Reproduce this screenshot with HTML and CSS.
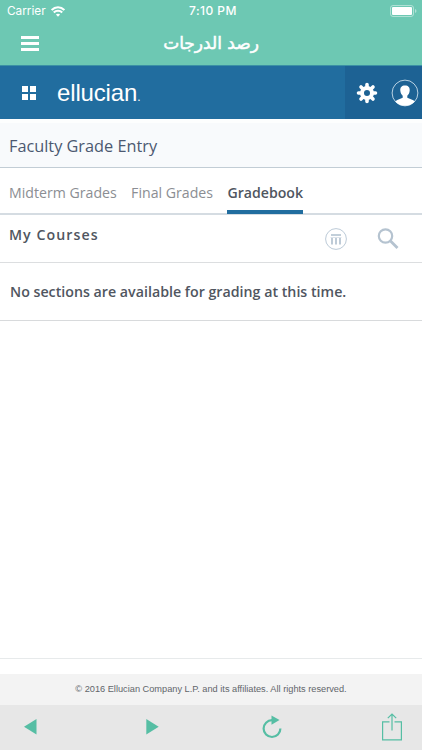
FILE: index.html
```
<!DOCTYPE html>
<html lang="en">
<head>
    <meta charset="UTF-8">
    <meta name="viewport" content="width=device-width, initial-scale=1.0">
    <title>Faculty Grade Entry</title>
    <link rel="stylesheet" href="styles.css">
</head>
<body>
    <div class="status-bar">
        <div class="carrier">
            <span>Carrier</span>
            <svg width="14" height="11" viewBox="0 0 14 11" fill="none" stroke="#fff" stroke-width="2.1">
                <path d="M.6 4.100C4.100.3 9.900.3 13.400 4.100"/>
                <path d="M2.800 6.600c2.300-2.400 6.100-2.400 8.400 0"/>
                <path d="M4.900 8.500L7 10.700l2.100-2.200c-1.200-1.100-3-1.100-4.200 0z" fill="#fff" stroke="none"/>
            </svg>
        </div>
        <div class="time">7:10 PM</div>
        <div class="battery">
            <svg width="27" height="12" viewBox="0 0 27 12">
                <rect x=".5" y=".5" width="23" height="11" rx="2.500" fill="none" stroke="#fff" stroke-opacity=".45"/>
                <rect x="2" y="2" width="20" height="8" rx="1" fill="#fff"/>
                <path d="M25 4v4q1.500-.5 1.500-2T25 4z" fill="#fff" fill-opacity=".45"/>
            </svg>
        </div>
    </div>
    <div class="nav-bar">
        <div class="menu"><i></i><i></i><i></i></div>
        <h1 lang="ar" dir="rtl">رصد الدرجات</h1>
    </div>

    <div class="header">
        <div class="apps"><i></i><i></i><i></i><i></i></div>
        <div class="logo">ellucian<small>.</small></div>
        <div class="user-tools">
            <svg class="gear" width="22" height="22" viewBox="-11 -11 22 22">
                <g stroke="#fff" stroke-width="3.600" stroke-linecap="round">
                    <path d="M0-8.500V-6M0 6v2.500M-8.500 0H-6M6 0h2.500"/>
                    <path d="M-6-6l1.800 1.800M4.200 4.200L6 6M-6 6l1.800-1.800M4.200-4.200L6-6"/>
                </g>
                <circle r="5" fill="none" stroke="#fff" stroke-width="4"/>
            </svg>
            <svg class="avatar" width="28" height="28" viewBox="0 0 28 28">
                <circle cx="14" cy="14" r="12.900" fill="none" stroke="#b9d2e3"/>
                <path d="M14 6.500c-3.300 0-5 2-4.700 5 .2 2.500 1.200 4.200 2.400 5.200v2.100l-5.400 2.300c-1 .4-1.500.9-1.800 1.600A12.700 12.700 0 0 0 14 26.800a12.700 12.700 0 0 0 9.500-4.100c-.3-.7-.8-1.200-1.800-1.600l-5.400-2.300v-2.100c1.200-1 2.200-2.700 2.400-5.200.3-3-1.400-5-4.700-5z" fill="#fff"/>
            </svg>
        </div>
    </div>

    <div class="page-title"><h2>Faculty Grade Entry</h2></div>

    <div class="tabs">
        <div class="tab">Midterm Grades</div>
        <div class="tab">Final Grades</div>
        <div class="tab active">Gradebook</div>
    </div>

    <div class="courses">
        <h3>My Courses</h3>
        <svg class="columns" width="24" height="24" viewBox="0 0 24 24">
            <circle cx="12" cy="12" r="10.400" fill="none" stroke="#bdcbd8"/>
            <path d="M7 8h10" stroke="#aebfce" stroke-width="1.500"/>
            <path d="M6.500 10.500h11" stroke="#d3dce4" stroke-width=".8"/>
            <path d="M8 11v6.500M12 11v6.500M16 11v6.500" stroke="#aebfce" stroke-width="1.600"/>
        </svg>
        <svg class="search" width="22" height="22" viewBox="0 0 22 22" fill="none" stroke="#b5c3d0">
            <circle cx="8.500" cy="8" r="6.700" stroke-width="2.200"/>
            <path d="M13 12.500l7.500 7.500" stroke-width="2.800"/>
        </svg>
    </div>

    <div class="message">No sections are available for grading at this time.</div>

    <div class="content"></div>
    <div class="footer">© 2016 Ellucian Company L.P. and its affiliates. All rights reserved.</div>

    <div class="toolbar">
        <svg class="back" width="13" height="16" viewBox="0 0 13 16"><path d="M12.500 0v15.500L0 7.800z"/></svg>
        <svg class="forward" width="13" height="16" viewBox="0 0 13 16"><path d="M.3 0v15.500L12.700 7.800z"/></svg>
        <svg class="reload" width="20" height="24" viewBox="0 0 20 24">
            <path d="M11 5.200h-1A8.400 8.400 0 1 0 18.400 13.600" fill="none" stroke="#56bea4" stroke-width="2.200"/>
            <path d="M9.500.4v9.400L17.500 5z"/>
        </svg>
        <svg class="share" width="22" height="28" viewBox="0 0 22 28" fill="none" stroke="#56bea4" stroke-width="1.200">
            <path d="M8.500 8.800H1.600v18h18.800v-18h-6.900M11 17.500V1M6.800 5.200L11 1l4.200 4.200"/>
        </svg>
    </div>
</body>
</html>
```
FILE: styles.css
```
:root {
    --mint: #6dc8b3;
    --blue: #216d9f;
    --dark-blue: #1d6294;
    --green: #56bea4;
    --text: #50565f;
}

* {
    box-sizing: border-box;
}

body {
    margin: 0;
    height: 750px;
    display: flex;
    flex-direction: column;
    overflow: hidden;
    background: white;
    color: var(--text);
    font-family: "Open Sans", sans-serif;
}

h1, h2, h3 {
    margin: 0;
    white-space: nowrap;
}

svg {
    display: block;
    flex: none;
}

.status-bar {
    height: 22px;
    flex: none;
    display: flex;
    align-items: center;
    background: var(--mint);
    color: white;
    font-family: Inter, sans-serif;
    font-size: 12px;
    line-height: 22px;
    padding: 0 5px 0 7px;
}

.carrier, .battery {
    flex: 1;
    display: flex;
    align-items: center;
    gap: 5px;
}

.carrier {
    font-size: 11.8px;
}

.time {
    font-weight: 500;
    letter-spacing: 0.45px;
    margin-left: 2px;
}

.battery {
    justify-content: flex-end;
}

.nav-bar {
    height: 43px;
    flex: none;
    display: flex;
    align-items: center;
    padding: 0 21px;
    background: var(--mint);
}

.menu {
    width: 18px;
    display: flex;
    flex-direction: column;
    gap: 3px;
}

.menu i {
    height: 3px;
    background: white;
}

.nav-bar h1 {
    flex: 1;
    margin-right: 18px;
    padding-bottom: 1px;
    color: white;
    font-family: "DejaVu Sans", sans-serif;
    font-size: 17px;
    font-weight: normal;
    -webkit-text-stroke: 0.5px white;
    text-align: center;
}

.header {
    height: 54px;
    flex: none;
    display: flex;
    align-items: center;
    background: var(--blue);
    border-top: 1px solid #3b91a5;
    padding-left: 22px;
}

.apps {
    display: grid;
    grid-template-columns: 6px 6px;
    grid-auto-rows: 6px;
    gap: 2px;
}

.apps i {
    background: white;
}

.logo {
    margin-left: 21px;
    padding-top: 5px;
    color: white;
    font-family: "Liberation Sans", Arial, sans-serif;
    font-size: 24px;
    letter-spacing: -0.15px;
    line-height: 49px;
}

.logo small {
    font-size: 12px;
}

.user-tools {
    margin-left: auto;
    width: 77px;
    height: 53px;
    display: flex;
    align-items: center;
    gap: 13px;
    padding-left: 11px;
    background: var(--dark-blue);
}

.page-title {
    height: 49px;
    flex: none;
    padding-left: 9px;
    background: #f8fafc;
    border-top: 4px solid #fdfefe;
    border-bottom: 1px solid #c2cdd5;
}

.page-title h2 {
    color: #4b5870;
    font-size: 16.3px;
    font-weight: normal;
    line-height: 46px;
}

.tabs {
    height: 47px;
    flex: none;
    display: flex;
    gap: 14.4px;
    padding-left: 9px;
    border-bottom: 2px solid #d5dce2;
}

.tab {
    height: 46px;
    color: #8b8e93;
    font-size: 14.15px;
    line-height: 49px;
    white-space: nowrap;
}

.tab.active {
    color: var(--text);
    font-weight: 600;
    border-bottom: 4px solid var(--blue);
}

.courses {
    height: 48px;
    flex: none;
    display: flex;
    align-items: center;
    padding: 0 23px 0 9px;
    border-bottom: 1px solid #dcdee0;
}

.courses h3 {
    font-size: 14.2px;
    font-weight: 600;
    letter-spacing: 1.05px;
    line-height: 20px;
    padding-bottom: 7px;
}

.columns {
    margin-left: auto;
}

.search {
    margin-left: 29px;
}

.message {
    height: 58px;
    flex: none;
    padding-left: 10px;
    border-bottom: 1px solid #d8dadc;
    font-size: 14.22px;
    font-weight: 600;
    line-height: 57px;
    white-space: nowrap;
}

.content {
    flex: 1;
    border-bottom: 1px solid #e7eaeb;
}

.footer {
    height: 31px;
    flex: none;
    margin-top: 15px;
    background: #f3f3f3;
    color: #62666b;
    font-family: "Liberation Sans", Arial, sans-serif;
    font-size: 9.22px;
    line-height: 31px;
    text-align: center;
    white-space: nowrap;
}

.toolbar {
    height: 45px;
    flex: none;
    display: flex;
    align-items: center;
    padding: 0 19px 1px 24px;
    background: #e7e7e7;
    fill: var(--green);
}

.forward {
    margin-left: 109px;
}

.reload {
    margin-left: 103px;
}

.share {
    margin-left: auto;
}
```
